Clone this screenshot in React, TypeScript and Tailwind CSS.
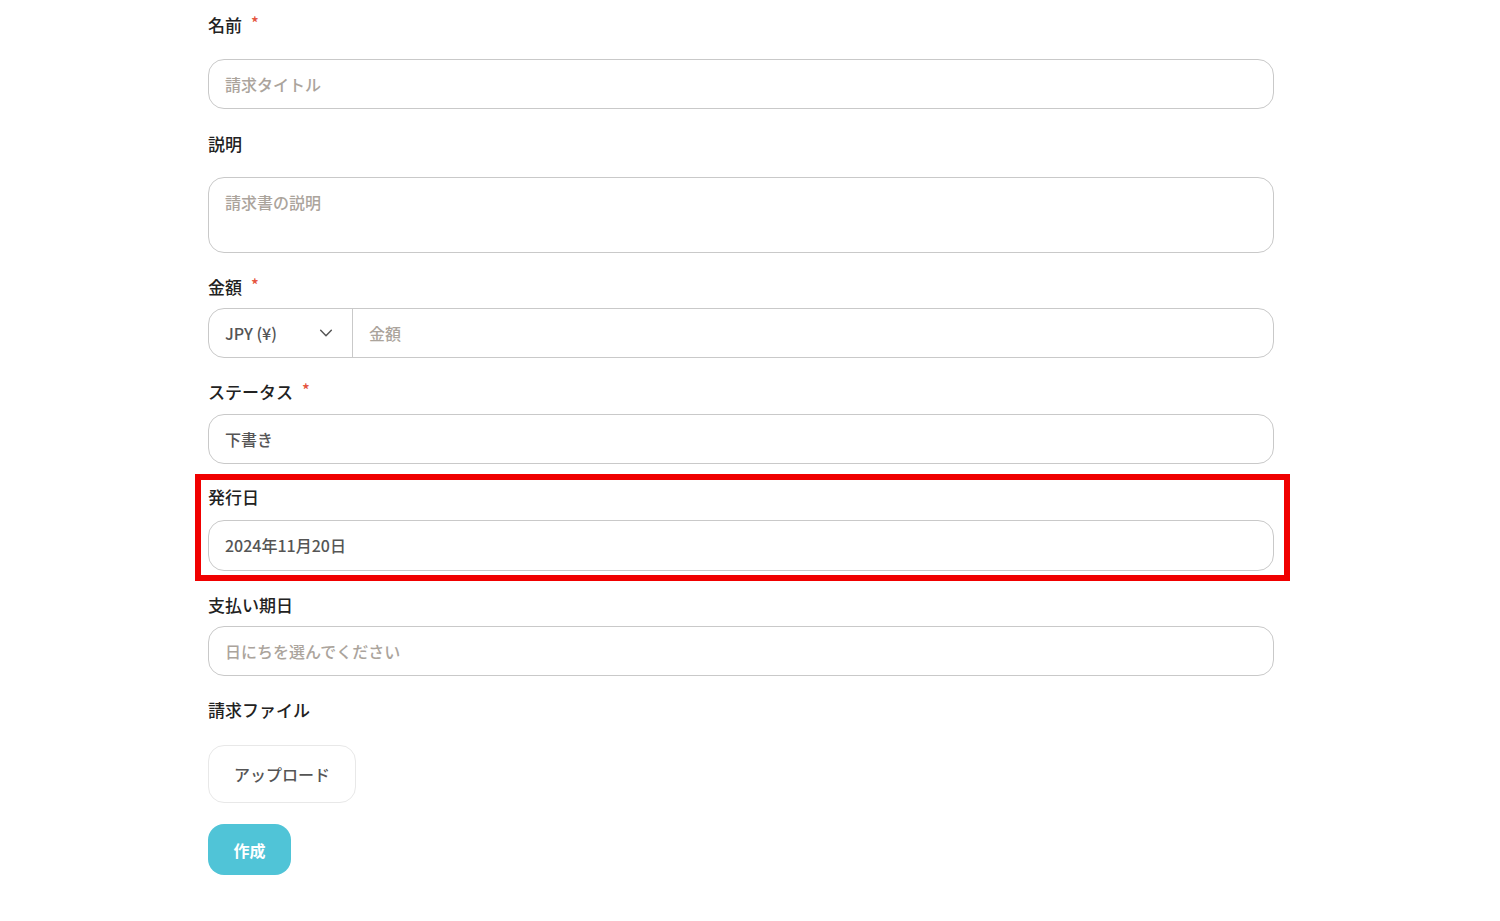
import React from 'react';

const font = { fontFamily: '"Noto Sans CJK JP", "Noto Sans", sans-serif' };

const Label: React.FC<{ text: string; required?: boolean; className?: string }> = ({ text, required = false, className = '' }) => (
    <div className={`h-6 flex items-center text-[17px] leading-6 font-medium text-[#222] ${className}`}>
        <span>{text}</span>
        {required && <span className="ml-[9px] -mt-[6px] text-[16px] leading-4 text-[#e5533d]">*</span>}
    </div>
);

const inputBox = 'w-full rounded-[16px] border border-[#c9c9c9] bg-white flex items-center pl-4 text-[16px] font-medium';

export default function App() {
    return (
        <div className="min-h-[921px] bg-white" style={font}>
            <div className="ml-[208px] w-[1066px] pt-[13px] flex flex-col">
                <Label text="名前" required className="mb-[22px]" />
                <div className={`${inputBox} h-[50px] text-[#aba49c]`}>請求タイトル</div>

                <Label text="説明" className="mt-[23px] mb-[21px]" />
                <div className={`${inputBox} h-[76px] items-start pt-[12px] text-[#aba49c]`}>請求書の説明</div>

                <Label text="金額" required className="mt-[22px] mb-[9px]" />
                <div className="w-full h-[50px] rounded-[16px] border border-[#c9c9c9] flex text-[16px] font-medium">
                    <div className="w-[144px] flex items-center justify-between pl-4 pr-[18px] border-r border-[#c9c9c9] text-[#555]">
                        <span>JPY (¥)</span>
                        <svg width="16" height="16" viewBox="0 0 24 24" fill="none" stroke="#555" strokeWidth="2.2" strokeLinecap="round" strokeLinejoin="round">
                            <path d="M4 8l8 8 8-8" />
                        </svg>
                    </div>
                    <div className="flex-1 flex items-center pl-4 text-[#aba49c]">金額</div>
                </div>

                <Label text="ステータス" required className="mt-[22px] mb-[10px]" />
                <div className={`${inputBox} h-[50px] text-[#555]`}>下書き</div>

                <div className="relative mt-[21px]">
                    <Label text="発行日" className="mb-[11px]" />
                    <div className={`${inputBox} h-[51px] pb-[2px] text-[#555]`}>2024年11月20日</div>
                    <div className="absolute -left-[13px] -right-[16px] -top-[11px] -bottom-[10px] border-[6px] border-[#f00000] pointer-events-none" />
                </div>

                <Label text="支払い期日" className="mt-[22px] mb-[9px]" />
                <div className={`${inputBox} h-[50px] text-[#aba49c]`}>日にちを選んでください</div>

                <Label text="請求ファイル" className="mt-[22px] mb-[23px]" />
                <div>
                    <button className="h-[58px] w-[148px] rounded-[16px] border border-[#e8e8e8] bg-white text-[16px] font-medium text-[#555]">
                        アップロード
                    </button>
                </div>

                <div className="mt-[21px]">
                    <button className="h-[51px] w-[83px] rounded-[16px] bg-[#50c4d7] text-[16px] font-bold text-white">
                        作成
                    </button>
                </div>
            </div>
        </div>
    );
}
